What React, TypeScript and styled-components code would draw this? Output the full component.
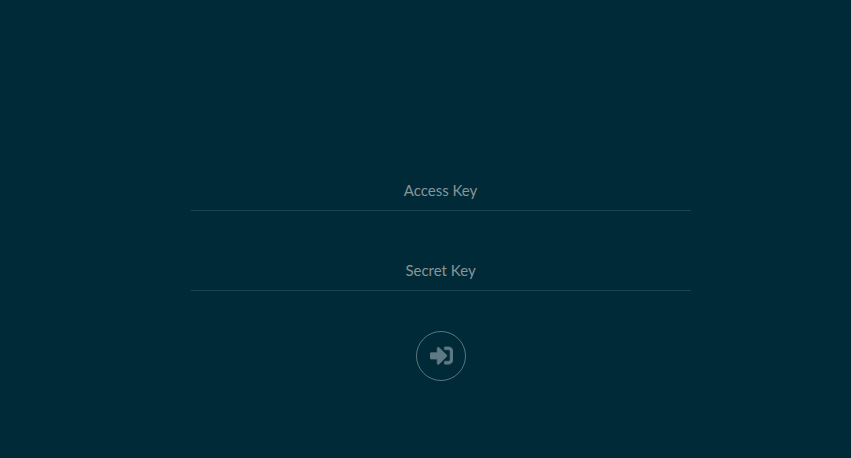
import * as React from 'react';
import styled, {createGlobalStyle} from 'styled-components';
import {FaSignInAlt} from 'react-icons/fa';

const GlobalStyle = createGlobalStyle`
  html, body {
    margin: 0;
    height: 100%;
    background: #002a37;
    font-family: Lato, "Open Sans", sans-serif;
  }
`;

const Page = styled.div`
  height: 458px;
  padding: 171px 0 0 191px;
  box-sizing: border-box;
  overflow: hidden;
`;

const Form = styled.form`
  width: 500px;
  display: flex;
  flex-direction: column;
  align-items: center;
`;

const Field = styled.input`
  width: 100%;
  height: 40px;
  padding: 0 1px 2px 0;
  margin-bottom: 40px;
  box-sizing: border-box;
  background: transparent;
  border: 0;
  border-bottom: 1px solid rgba(255, 255, 255, 0.12);
  outline: none;
  text-align: center;
  font-family: inherit;
  font-size: 15px;
  color: #fff;

  &::placeholder {
    color: #8b9497;
    opacity: 1;
  }
`;

const SubmitButton = styled.button`
  width: 50px;
  height: 50px;
  padding: 0 0 1px 1px;
  display: flex;
  align-items: center;
  justify-content: center;
  background: transparent;
  border: 1px solid rgba(255, 255, 255, 0.35);
  border-radius: 50%;
  color: #5f7a84;
  font-size: 23px;

  svg {
    stroke: currentColor;
    stroke-width: 14;
  }
`;

const App = () => (
  <>
    <GlobalStyle />
    <Page>
      <Form onSubmit={(e) => e.preventDefault()}>
        <Field placeholder="Access Key" />
        <Field placeholder="Secret Key" />
        <SubmitButton type="submit" aria-label="Sign in">
          <FaSignInAlt />
        </SubmitButton>
      </Form>
    </Page>
  </>
);

export default App;
